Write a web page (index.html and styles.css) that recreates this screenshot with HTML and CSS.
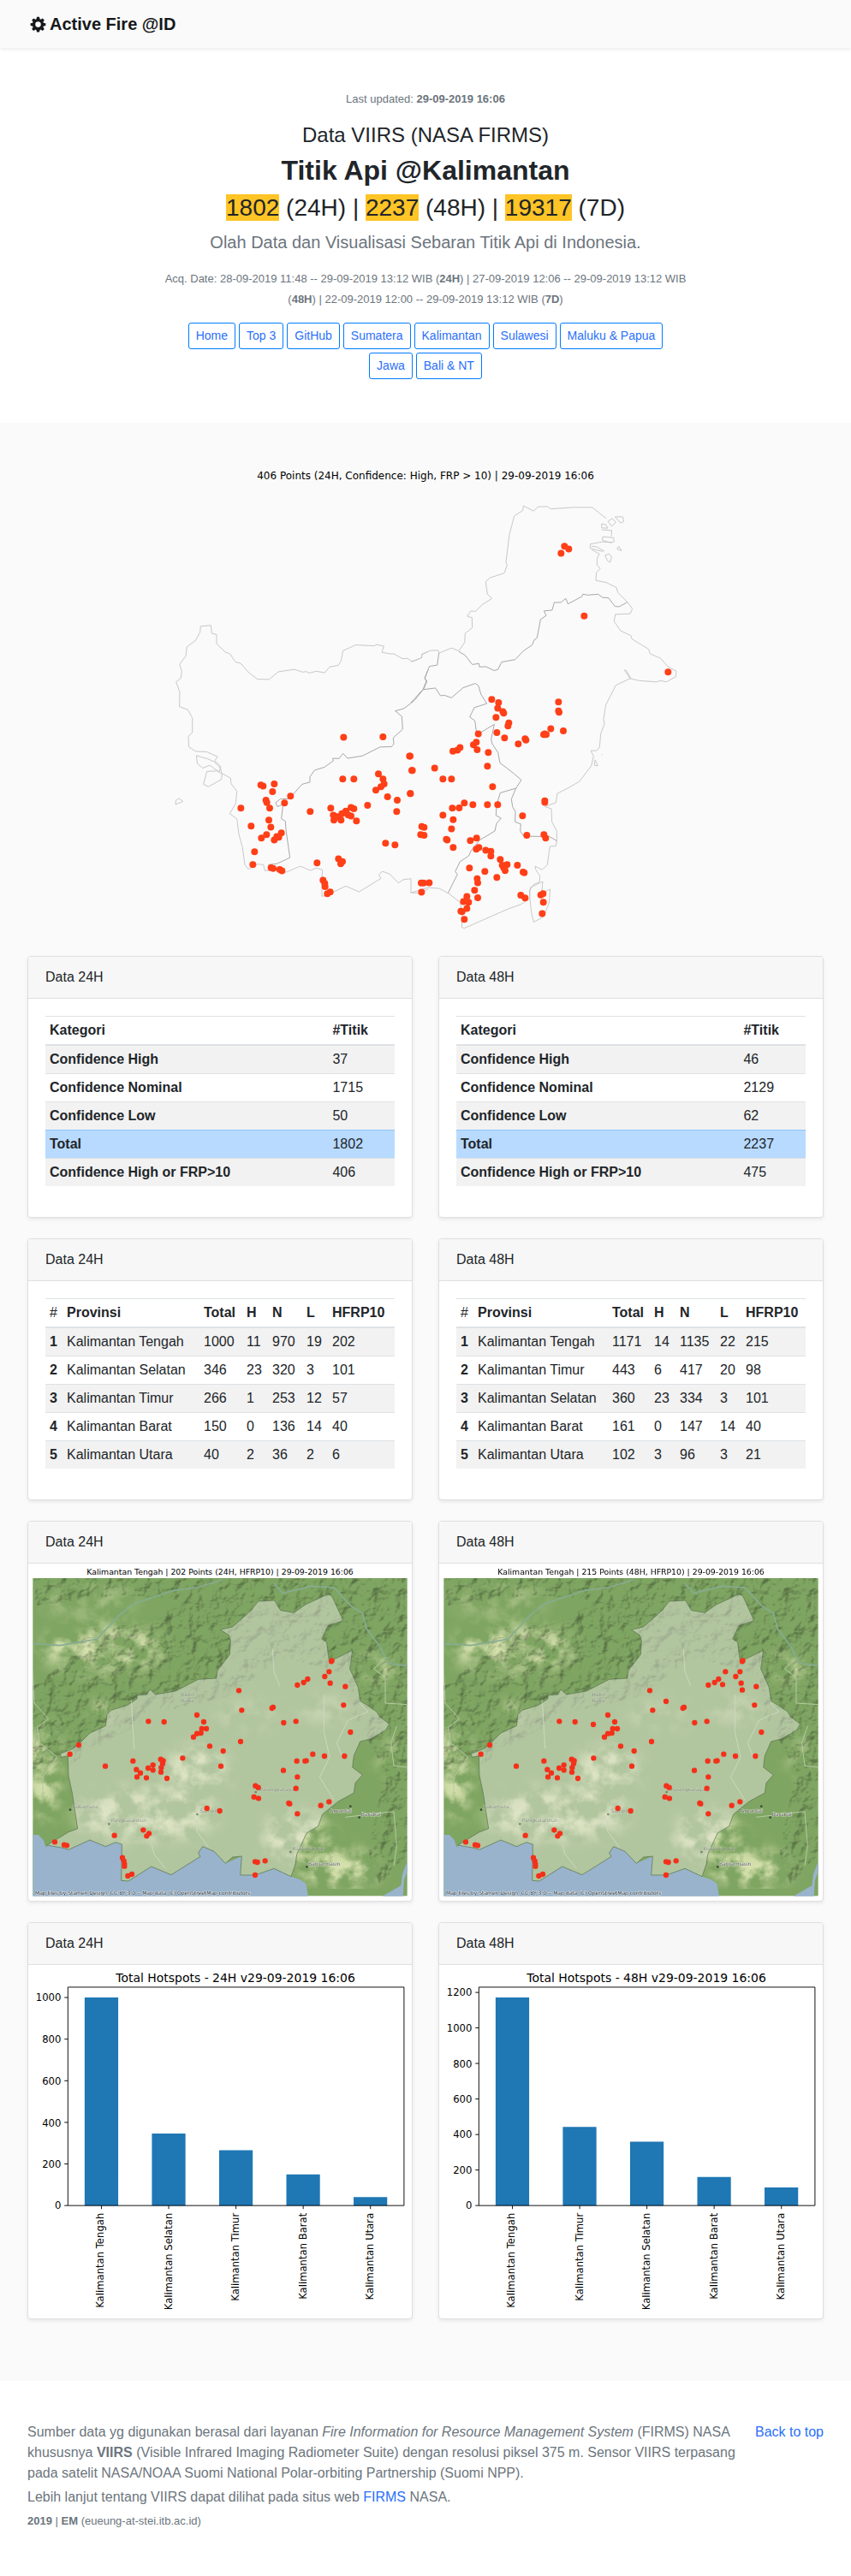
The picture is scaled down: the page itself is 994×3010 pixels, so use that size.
FILE: index.html
```html
<!DOCTYPE html>
<html lang="id">
<head>
<meta charset="utf-8">
<meta name="viewport" content="width=device-width, initial-scale=1">
<title>Active Fire @ID</title>
<link rel="stylesheet" href="styles.css">
</head>
<body id="top">
<header class="navbar">
  <a class="brand" href="#top">
    <svg class="brand-icon" viewBox="0 0 18 18" aria-hidden="true"><path fill-rule="evenodd" d="M7.6 .8h2.8l.5 2.3 1 .5 2.1-1.2 1.9 1.9-1.3 2 .5 1.1 2.3.5v2.5l-2.3.6-.5 1.1 1.3 2-1.9 1.9-2.1-1.2-1 .5-.5 2.2H7.6l-.5-2.2-1-.5-2.1 1.2-1.9-1.9 1.3-2-.5-1.1-2.3-.6V7.900l2.3-.5.5-1.100-1.3-2L4 2.400l2.100 1.200 1-.5zM9 6a3.100 3.100 0 1 0 0 6.200A3.100 3.100 0 0 0 9 6z"/></svg>
    <span>Active Fire @ID</span>
  </a>
</header>
<main>
<section class="hero">
  <div class="hero-inner">
    <p class="note">Last updated: <strong>29-09-2019 16:06</strong></p>
    <h3 class="source">Data VIIRS (NASA FIRMS)</h3>
    <h1 class="title">Titik Api @Kalimantan</h1>
    <h2 class="counts"><mark>1802</mark> (24H) | <mark>2237</mark> (48H) | <mark>19317</mark> (7D)</h2>
    <p class="lead">Olah Data dan Visualisasi Sebaran Titik Api di Indonesia.</p>
    <p class="note acq">Acq. Date: 28-09-2019 11:48 -- 29-09-2019 13:12 WIB (<strong>24H</strong>) | 27-09-2019 12:06 -- 29-09-2019 13:12 WIB (<strong>48H</strong>) | 22-09-2019 12:00 -- 29-09-2019 13:12 WIB (<strong>7D</strong>)</p>
    <nav class="links">
      <a class="btn" href="#home">Home</a>
      <a class="btn" href="#top3">Top 3</a>
      <a class="btn" href="#github">GitHub</a>
      <a class="btn" href="#sumatera">Sumatera</a>
      <a class="btn" href="#kalimantan">Kalimantan</a>
      <a class="btn" href="#sulawesi">Sulawesi</a>
      <a class="btn" href="#maluku">Maluku &amp; Papua</a>
      <a class="btn" href="#jawa">Jawa</a>
      <a class="btn" href="#bali">Bali &amp; NT</a>
    </nav>
  </div>
</section>
<section class="album">
  <div class="container">
    <svg class="island" viewBox="0 12 930 551" role="img" aria-label="Peta titik api Kalimantan">
      <text class="map-title" x="465" y="30" text-anchor="middle">406 Points (24H, Confidence: High, FRP &gt; 10) | 29-09-2019 16:06</text>
      <g transform="translate(148 0) scale(.33333 .35714)">
        <path class="coast" d="M960 648 938 656 938 668 905 681 888 670 870 671 840 655 825 655 798 650 805 630 780 625 770 629 707 626 685 635 662 645 655 678 645 693 615 698 598 717 568 712 545 718 532 713 520 715 492 706 435 714 403 739 362 738 330 715 303 686 285 682 266 655 250 650 219 622 219 592 202 588 199 562 163 565 161 584 145 612 115 632 111 662 89 690 97 710 94 735 77 747 90 780 89 828 118 838 134 865 134 913 120 925 122 960 145 974 185 976 223 992 212 1005 232 1022 236 1045 268 1062 270 1080 290 1105 286 1145 265 1178 290 1195 297 1245 310 1290 318 1345 330 1360 362 1343 383 1345 388 1365 425 1362 462 1370 512 1350 548 1364 568 1356 590 1362 588 1395 588 1448 600 1447 672 1415 718 1434 795 1390 787 1378 800 1367 825 1375 856 1405 873 1394 900 1391 900 1437 930 1438 960 1425M148 988 188 999 210 1008 232 1028 228 1042 195 1020 170 1029 152 1015ZM185 1040 222 1038 238 1050 236 1066 190 1090 173 1082ZM76 1135 88 1128 101 1138 75 1148Z"/>
        <path class="border" d="M960 707 949 735 956 745 945 770 912 808 876 834 845 842 868 860 871 902 838 930 840 950 832 959 792 960 730 989 678 997 662 981 648 998 626 997 628 1005 597 1026 562 1036 546 1058 546 1075 518 1082 490 1112 470 1130 442 1130 426 1142 432 1155 452 1148 446 1195 460 1203 462 1230 476 1322 430 1342 400 1345"/>
        <path class="fire" d="M664 928h0M802 927h0M895 990h0M903 1037h0M786 1048h0M661 1065h0M700 1065h0M802 1065h0M806 1081h0M795 1090h0M777 1101h0M898 1112h0M818 1123h0M852 1134h0M748 1151h0M850 1171h0M619 1160h0M690 1158h0M700 1162h0M672 1170h0M658 1178h0M628 1183h0M640 1188h0M690 1186h0M680 1182h0M655 1199h0M630 1199h0M709 1202h0M547 1171h0M374 1084h0M382 1088h0M421 1081h0M415 1106h0M392 1134h0M395 1142h0M405 1160h0M478 1121h0M457 1143h0M304 1160h0M402 1199h0M409 1222h0M340 1219h0M394 1247h0M376 1258h0M446 1241h0M430 1253h0M421 1264h0M437 1255h0M352 1303h0M346 1345h0M410 1355h0M417 1357h0M440 1361h0M448 1365h0M571 1339h0M646 1326h0M660 1335h0M654 1342h0M592 1396h0M598 1406h0M599 1417h0M607 1440h0M617 1434h0M811 1275h0M844 1280h0"/>
      </g>
      <g transform="translate(448 0) scale(.33333 .35714)">
        <path class="coast" d="M0 681 37 668 39 657 67 645 95 643 98 653 142 636 168 646 188 618 190 588 215 570 214 537 197 532 210 515 226 516 250 494 284 474 268 460 262 420 275 407 327 391 337 365 333 355 345 265 362 204 392 186 394 171 430 188 445 174 478 173 490 181 568 176 635 176 684 212M704 252 702 270M668 249 704 252M705 290 670 289 628 296 628 310 670 320 676 318 650 305 632 303M634 315 660 328 652 345 652 365 663 376 650 390 648 415 685 422 720 438 725 455 758 485 776 508 768 524 716 526 712 549 735 580 770 595 775 607 833 640 838 655 875 670 900 697 930 712 928 730 895 747 875 743 860 747 800 743 768 736 748 708 755 710 770 735 718 758 683 822 675 870 678 885 665 917 661 960 650 972 630 972 640 990 632 1022 590 1073 555 1092 513 1112 508 1142 470 1155 492 1162 494 1205 511 1235 511 1268 508 1284 487 1285 478 1345 460 1362 435 1350 437 1360 452 1382 450 1402 430 1410 415 1430 417 1455 385 1475 340 1490 187 1553 178 1550 180 1500 172 1468 130 1438 100 1423 60 1420 0 1437M462 1400 458 1440 488 1425 484 1470 465 1515 430 1533 422 1500 416 1450 418 1420ZM672 272 710 275 712 288 700 292 670 283ZM668 230 682 232 690 244 668 243ZM690 222 705 212 718 225 704 238ZM715 207 742 207 746 222 735 227ZM680 333 695 328 703 338 698 356 688 350ZM722 312 728 303 738 318ZM645 1002 655 1021 643 1020ZM668 985h3"/>
        <path class="border" d="M168 648 190 660 215 690 238 687 240 698 262 697 292 710 305 706 318 682 365 674 395 645 425 626 432 610 442 603 454 543 474 530 466 515 495 512 502 487 525 487 543 474 550 492 600 467 602 460 620 463 656 460 672 471 692 472 715 500 730 501 758 486M98 653 92 692 65 696 48 735 54 745 42 772 0 815M45 772 86 767 103 792 118 791 142 799 183 766 226 752 237 760 245 787 266 818 222 831 206 862 224 874 230 915 238 916 292 886 281 935 285 950 305 978 312 1012 358 1045 387 1068 368 1095 313 1110 300 1150 298 1184 316 1193 300 1210 294 1235 240 1265 210 1300 203 1316 172 1335 155 1368 163 1376 130 1438M368 1095 352 1130 356 1155 366 1172 365 1205 385 1212 383 1235 395 1252 485 1253 511 1267"/>
        <path class="fire" d="M538 303h0M553 312h0M526 326h0M607 531h0M901 715h0M283 804h0M307 815h0M304 833h0M322 844h0M325 849h0M298 863h0M343 881h0M340 891h0M517 813h0M517 842h0M519 846h0M301 913h0M328 930h0M400 933h0M403 937h0M376 950h0M490 900h0M534 907h0M465 919h0M474 919h0M469 917h0M236 917h0M229 944h0M219 953h0M232 969h0M271 978h0M172 962h0M163 970h0M147 974h0M268 1023h0M83 1029h0M112 1065h0M142 1065h0M286 1090h0M187 1143h0M145 1160h0M169 1159h0M217 1149h0M268 1149h0M304 1149h0M112 1183h0M148 1198h0M142 1228h0M124 1262h0M127 1264h0M148 1289h0M469 1136h0M469 1141h0M391 1185h0M406 1249h0M466 1247h0M472 1258h0M208 1266h0M230 1258h0M238 1289h0M229 1294h0M262 1298h0M280 1301h0M280 1317h0M313 1328h0M205 1356h0M259 1367h0M320 1347h0M337 1345h0M325 1355h0M330 1364h0M373 1347h0M393 1369h0M397 1371h0M301 1387h0M232 1391h0M234 1404h0M223 1429h0M234 1453h0M196 1449h0M184 1466h0M202 1468h0M196 1488h0M175 1497h0M179 1499h0M187 1524h0M385 1445h0M400 1454h0M463 1440h0M455 1444h0M464 1468h0M460 1505h0M64 1404h0M44 1405h0M36 1405h0M38 1220h0M46 1223h0M34 1247h0M46 1249h0M37 1435h0M-3 990h0M5 1037h0M-2 1112h0"/>
      </g>
    </svg>

    <div class="cards">
      <article class="card">
        <div class="card-header">Data 24H</div>
        <div class="card-body">
          <table class="table summary">
            <thead><tr><th scope="col">Kategori</th><th scope="col">#Titik</th></tr></thead>
            <tbody>
              <tr><th scope="row">Confidence High</th><td>37</td></tr>
              <tr><th scope="row">Confidence Nominal</th><td>1715</td></tr>
              <tr><th scope="row">Confidence Low</th><td>50</td></tr>
              <tr class="total"><th scope="row">Total</th><td>1802</td></tr>
              <tr><th scope="row">Confidence High or FRP&gt;10</th><td>406</td></tr>
            </tbody>
          </table>
        </div>
      </article>
      <article class="card">
        <div class="card-header">Data 48H</div>
        <div class="card-body">
          <table class="table summary">
            <thead><tr><th scope="col">Kategori</th><th scope="col">#Titik</th></tr></thead>
            <tbody>
              <tr><th scope="row">Confidence High</th><td>46</td></tr>
              <tr><th scope="row">Confidence Nominal</th><td>2129</td></tr>
              <tr><th scope="row">Confidence Low</th><td>62</td></tr>
              <tr class="total"><th scope="row">Total</th><td>2237</td></tr>
              <tr><th scope="row">Confidence High or FRP&gt;10</th><td>475</td></tr>
            </tbody>
          </table>
        </div>
      </article>

      <article class="card">
        <div class="card-header">Data 24H</div>
        <div class="card-body">
          <table class="table provinces">
            <colgroup><col class="c-rank"><col class="c-name"><col class="c-total"><col class="c-h"><col class="c-n"><col class="c-l"><col></colgroup>
            <thead><tr><td>#</td><th scope="col">Provinsi</th><th scope="col">Total</th><th scope="col">H</th><th scope="col">N</th><th scope="col">L</th><th scope="col">HFRP10</th></tr></thead>
            <tbody>
              <tr><th scope="row">1</th><td>Kalimantan Tengah</td><td>1000</td><td>11</td><td>970</td><td>19</td><td>202</td></tr>
              <tr><th scope="row">2</th><td>Kalimantan Selatan</td><td>346</td><td>23</td><td>320</td><td>3</td><td>101</td></tr>
              <tr><th scope="row">3</th><td>Kalimantan Timur</td><td>266</td><td>1</td><td>253</td><td>12</td><td>57</td></tr>
              <tr><th scope="row">4</th><td>Kalimantan Barat</td><td>150</td><td>0</td><td>136</td><td>14</td><td>40</td></tr>
              <tr><th scope="row">5</th><td>Kalimantan Utara</td><td>40</td><td>2</td><td>36</td><td>2</td><td>6</td></tr>
            </tbody>
          </table>
        </div>
      </article>
      <article class="card">
        <div class="card-header">Data 48H</div>
        <div class="card-body">
          <table class="table provinces wide-n">
            <colgroup><col class="c-rank"><col class="c-name"><col class="c-total"><col class="c-h"><col class="c-n"><col class="c-l"><col></colgroup>
            <thead><tr><td>#</td><th scope="col">Provinsi</th><th scope="col">Total</th><th scope="col">H</th><th scope="col">N</th><th scope="col">L</th><th scope="col">HFRP10</th></tr></thead>
            <tbody>
              <tr><th scope="row">1</th><td>Kalimantan Tengah</td><td>1171</td><td>14</td><td>1135</td><td>22</td><td>215</td></tr>
              <tr><th scope="row">2</th><td>Kalimantan Timur</td><td>443</td><td>6</td><td>417</td><td>20</td><td>98</td></tr>
              <tr><th scope="row">3</th><td>Kalimantan Selatan</td><td>360</td><td>23</td><td>334</td><td>3</td><td>101</td></tr>
              <tr><th scope="row">4</th><td>Kalimantan Barat</td><td>161</td><td>0</td><td>147</td><td>14</td><td>40</td></tr>
              <tr><th scope="row">5</th><td>Kalimantan Utara</td><td>102</td><td>3</td><td>96</td><td>3</td><td>21</td></tr>
            </tbody>
          </table>
        </div>
      </article>

      <article class="card">
        <div class="card-header">Data 24H</div>
        <svg class="figure" viewBox="9 171 1344 1182" role="img" aria-label="Peta titik api Kalimantan Tengah, 24 jam">
          <defs>
            <clipPath id="frame"><rect x="25" y="222" width="1312" height="1114"/></clipPath>
            <filter id="soft" x="-50%" y="-50%" width="200%" height="200%"><feGaussianBlur stdDeviation="28"/></filter>
            <filter id="patches" x="0" y="0" width="100%" height="100%" color-interpolation-filters="sRGB">
              <feTurbulence type="fractalNoise" baseFrequency=".016" numOctaves="5" seed="11"/>
              <feColorMatrix values="0 0 0 0 .84  0 0 0 0 .88  0 0 0 0 .68  3 0 0 0 -1.1"/>
              <feComposite in2="SourceGraphic" operator="in"/>
            </filter>
            <filter id="relief" x="0" y="0" width="100%" height="100%" color-interpolation-filters="sRGB">
              <feTurbulence type="fractalNoise" baseFrequency=".022" numOctaves="4" seed="4"/>
              <feDiffuseLighting lighting-color="#fff" surfaceScale="16" diffuseConstant="1.2"><feDistantLight azimuth="225" elevation="60"/></feDiffuseLighting>
              <feComposite in2="SourceGraphic" operator="in"/>
            </filter>
            <g id="basemap" clip-path="url(#frame)">
              <rect x="25" y="222" width="1312" height="1114" fill="#7fa562"/>
              <g filter="url(#patches)">
                <g filter="url(#soft)">
                  <ellipse cx="220" cy="300" rx="170" ry="60" opacity=".4"/>
                  <ellipse cx="270" cy="470" rx="220" ry="80"/>
                  <ellipse cx="60" cy="900" rx="60" ry="170"/>
                  <ellipse cx="265" cy="690" rx="40" ry="30"/>
                  <ellipse cx="420" cy="1050" rx="250" ry="90"/>
                  <ellipse cx="600" cy="900" rx="110" ry="90"/>
                  <ellipse cx="780" cy="700" rx="120" ry="50" opacity=".4"/>
                  <ellipse cx="1050" cy="680" rx="100" ry="50" opacity=".5"/>
                  <ellipse cx="950" cy="1130" rx="120" ry="90"/>
                  <ellipse cx="1240" cy="540" rx="70" ry="40"/>
                  <ellipse cx="1100" cy="1240" rx="140" ry="70"/>
                  <ellipse cx="1270" cy="850" rx="40" ry="80" opacity=".5"/>
                </g>
              </g>
              <path class="relief" filter="url(#relief)" d="M25 222H1337V1190L1240 1300 1200 1180 1260 900 1150 700 1130 560 900 500 700 640 480 690 270 800 150 880 25 900V600L160 500 220 400 420 380 560 300 330 280 25 320Z"/>
              <path class="river" d="M25 452 120 458 250 436 330 350 380 312 520 265 600 255 690 228M870 240 900 275 1000 250 1080 255 1140 320 1180 345 1195 400 1240 460 1270 520 1337 530"/>
              <path class="stream" d="M25 545 30 660 80 715 40 745 50 800 110 850 60 920 60 1000M865 470 870 550 890 600M1045 630 1045 760 1065 850 1030 920 1080 1000M1260 500 1220 540 1260 570 1260 660 1337 665M1170 660 1200 690 1130 720 1090 800 1110 850M1300 740 1280 800 1290 880 1337 885M370 650 380 820M590 1050 600 1110 640 1165M440 1150 450 1190 490 1240M1120 1060 1290 1040 1300 1160 1290 1230"/>
              <path class="sea" d="M25 1122 45 1122 62 1140 70 1165 80 1158 100 1160 150 1174 225 1140 280 1163 315 1148 337 1155 335 1282 360 1284 440 1233 510 1262 612 1198 605 1185 620 1163 660 1180 700 1222 757 1197 752 1263 805 1263 870 1240 930 1268 960 1278 982 1292 990 1337H25ZM1337 1215 1320 1260 1315 1300 1250 1337H1322L1326 1280 1337 1250Z"/>
              <path class="province" d="M1055 280Q1072 276 1080 300L1110 365 1108 373 1060 388 1037 435 1055 447 1063 512 1090 502 1145 475 1136 540 1165 605 1172 652 1230 690 1240 708 1274 733 1262 755 1210 785 1172 795 1150 845 1145 885 1180 912 1155 940 1150 975 1095 1005 1040 1050 1025 1092 985 1115 950 1190 945 1225 930 1268 870 1240 805 1263 752 1263 757 1197 725 1200 700 1222 660 1180 620 1163 605 1185 612 1198 510 1262 440 1233 360 1284 335 1282 337 1155 315 1148 280 1163 225 1140 150 1174 130 1168 75 1158 150 1112 182 1100 163 975 150 915 148 845 125 850 120 838 165 820 190 800 225 765 280 740 285 700 300 685 355 668 390 645 390 632 425 630 435 612 455 630 525 618 605 577 668 573 672 545 715 490 718 440 712 422 682 403 725 393 790 335 815 303 872 300 893 335 940 343 980 315Z"/>
              <g class="place-marks"><circle cx="156" cy="1034" r="4"/><circle cx="1138" cy="1022" r="4"/><circle cx="1169" cy="1061" r="4"/><circle cx="985" cy="1234" r="4"/></g>
              <g class="place-marks faded"><circle cx="292" cy="1084" r="4"/><circle cx="601" cy="1050" r="4"/><circle cx="928" cy="1182" r="4"/><circle cx="806" cy="972" r="4"/></g>
              <g class="place faded"><text x="545" y="635">Bukit</text><text x="545" y="658">Baka</text><text x="820" y="968">Palangkaraya</text><text x="610" y="1045">Sampit</text><text x="163" y="1028">Sukamara</text><text x="298" y="1077">Pangkalanbun</text><text x="934" y="1176">Kualakapuas</text></g>
              <g class="place"><text x="1066" y="1043">Amuntai</text><text x="1175" y="1055">Barabai</text><text x="990" y="1229">Banjarmasin</text></g>
              <path class="fire-local" d="M1073 511h0M1071 514h0M1063 550h0M1048 567h0M1067 590h0M1120 602h0M988 576h0M974 588h0M952 597h0M747 616h0M1114 667h0M757 685h0M867 675h0M863 678h0M947 724h0M904 729h0M600 702h0M430 724h0M485 726h0M624 726h0M617 750h0M633 750h0M614 765h0M600 767h0M588 779h0M1138 762h0M753 795h0M645 811h0M692 828h0M186 807h0M155 839h0M550 853h0M684 881h0M279 881h0M376 863h0M473 857h0M482 862h0M480 872h0M475 886h0M474 902h0M446 877h0M429 888h0M446 895h0M388 893h0M402 905h0M390 919h0M423 922h0M495 924h0M1006 839h0M1047 846h0M1117 846h0M950 863h0M979 863h0M983 862h0M903 896h0M952 919h0M947 959h0M805 950h0M815 956h0M800 989h0M816 994h0M922 1011h0M925 1013h0M1063 1006h0M1034 1019h0M952 1048h0M635 1029h0M680 1038h0M412 1105h0M432 1117h0M424 1126h0M311 1124h0M102 1147h0M135 1157h0M144 1159h0M339 1202h0M344 1213h0M346 1224h0M346 1232h0M358 1266h0M372 1260h0M804 1216h0M812 1218h0M839 1213h0M804 1263h0"/>
              <text class="credit" x="33" y="1331">Map tiles by Stamen Design, CC BY 3.0 -- Map data (C) OpenStreetMap contributors</text>
            </g>
          </defs>
          <use href="#basemap"/>
          <text class="figure-title" x="681" y="210" text-anchor="middle">Kalimantan Tengah | 202 Points (24H, HFRP10) | 29-09-2019 16:06</text>
        </svg>
      </article>
      <article class="card">
        <div class="card-header">Data 48H</div>
        <svg class="figure" viewBox="9 171 1344 1182" role="img" aria-label="Peta titik api Kalimantan Tengah, 48 jam">
          <use href="#basemap"/>
          <path class="fire-local" d="M1012 550h0M1002 595h0M1071 614h0M804 654h0M549 735h0"/>
          <text class="figure-title" x="681" y="210" text-anchor="middle">Kalimantan Tengah | 215 Points (48H, HFRP10) | 29-09-2019 16:06</text>
        </svg>
      </article>

      <article class="card">
        <div class="card-header">Data 24H</div>
        <svg class="figure chart" viewBox="0 0 385 355" role="img" aria-label="Total Hotspots 24H">
          <text class="chart-title" x="208" y="17" text-anchor="middle">Total Hotspots - 24H v29-09-2019 16:06</text>
          <path class="bars" d="M56.600 241.600v-208.900h33.700v208.900zM124.100 241.600v-72.300h33.700v72.300zM191.600 241.600v-55.600h33.700v55.600zM259.100 241.600v-31.300h33.700v31.300zM326.600 241.600v-8.400h33.700v8.400z"/>
          <path class="axis" d="M39.800 22.300H377.200V241.600H39.800ZM36.300 241.600h3.500M36.300 199.800h3.500M36.300 158.100h3.500M36.300 116.300h3.500M36.300 74.500h3.500M36.300 32.700h3.500M73.500 241.600v3.500M141 241.600v3.500M208.500 241.600v3.500M276 241.600v3.500M343.500 241.600v3.500"/>
          <g class="ticks" text-anchor="end">
            <text x="33" y="245">0</text><text x="33" y="204">200</text><text x="33" y="162">400</text><text x="33" y="120">600</text><text x="33" y="78">800</text><text x="33" y="36">1000</text>
            <text transform="translate(76 249) rotate(-90)">Kalimantan Tengah</text>
            <text transform="translate(144 249) rotate(-90)">Kalimantan Selatan</text>
            <text transform="translate(211 249) rotate(-90)">Kalimantan Timur</text>
            <text transform="translate(279 249) rotate(-90)">Kalimantan Barat</text>
            <text transform="translate(346 249) rotate(-90)">Kalimantan Utara</text>
          </g>
        </svg>
      </article>
      <article class="card">
        <div class="card-header">Data 48H</div>
        <svg class="figure chart" viewBox="0 0 385 355" role="img" aria-label="Total Hotspots 48H">
          <text class="chart-title" x="208" y="17" text-anchor="middle">Total Hotspots - 48H v29-09-2019 16:06</text>
          <path class="bars" d="M56.600 241.600v-208.900h33.700v208.900zM124.100 241.600v-79h33.700v79zM191.600 241.600v-64.200h33.700v64.200zM259.100 241.600v-28.700h33.700v28.700zM326.600 241.600v-18.200h33.700v18.200z"/>
          <path class="axis" d="M39.800 22.300H377.200V241.600H39.800ZM36.300 241.600h3.500M36.300 205.900h3.500M36.300 170.300h3.500M36.300 134.600h3.500M36.300 98.900h3.500M36.300 63.200h3.500M36.300 27.600h3.500M73.500 241.600v3.500M141 241.600v3.500M208.500 241.600v3.500M276 241.600v3.500M343.500 241.600v3.500"/>
          <g class="ticks" text-anchor="end">
            <text x="33" y="245">0</text><text x="33" y="210">200</text><text x="33" y="174">400</text><text x="33" y="138">600</text><text x="33" y="103">800</text><text x="33" y="67">1000</text><text x="33" y="31">1200</text>
            <text transform="translate(76 249) rotate(-90)">Kalimantan Tengah</text>
            <text transform="translate(144 249) rotate(-90)">Kalimantan Timur</text>
            <text transform="translate(211 249) rotate(-90)">Kalimantan Selatan</text>
            <text transform="translate(279 249) rotate(-90)">Kalimantan Barat</text>
            <text transform="translate(346 249) rotate(-90)">Kalimantan Utara</text>
          </g>
        </svg>
      </article>
    </div>
  </div>
</section>
</main>
<footer class="footer">
  <div class="container footer-row">
    <div class="about">
      <p>Sumber data yg digunakan berasal dari layanan <em>Fire Information for Resource Management System</em> (FIRMS) NASA khususnya <strong>VIIRS</strong> (Visible Infrared Imaging Radiometer Suite) dengan resolusi piksel 375 m. Sensor VIIRS terpasang pada satelit NASA/NOAA Suomi National Polar-orbiting Partnership (Suomi NPP).</p>
      <p>Lebih lanjut tentang VIIRS dapat dilihat pada situs web <a href="#firms">FIRMS</a> NASA.</p>
      <p class="note"><strong>2019</strong> | <strong>EM</strong> (eueung-at-stei.itb.ac.id)</p>
    </div>
    <a class="back" href="#top">Back to top</a>
  </div>
</footer>
</body>
</html>
```
FILE: styles.css
```css
* { box-sizing: border-box; }
body {
  margin: 0;
  background: #fff;
  color: #212529;
  font: 16px/24px "Liberation Sans", Arial, sans-serif;
}
h1, h2, h3, p { margin: 0; }
a { color: #2a70fa; text-decoration: none; }

.navbar {
  display: flex;
  align-items: center;
  height: 56px;
  padding: 0 35px;
  background: #fafafa;
  box-shadow: 0 2px 4px rgba(0, 0, 0, .075);
}
.brand {
  display: flex;
  align-items: center;
  gap: 4px;
  color: #16181b;
  font-size: 20px;
  font-weight: 700;
}
.brand-icon { width: 19px; height: 19px; fill: currentColor; }

.hero { padding: 48px 16px 51px; text-align: center; }
.hero-inner { max-width: 610px; margin: 0 auto; }
.note { color: #6c757d; font-size: 13px; }
.source { margin-top: 15px; font-size: 24px; line-height: 29px; font-weight: 400; }
.title { margin-top: 8px; font-size: 32px; line-height: 38px; }
.counts { margin-top: 8px; font-size: 28px; line-height: 34px; font-weight: 400; }
.counts mark { background: #ffc425; color: inherit; }
.lead { margin-top: 8px; color: #6c757d; font-size: 20px; line-height: 30px; }
.acq { margin: 16px 0 15px; }
.links { display: flex; flex-wrap: wrap; justify-content: center; gap: 4px; padding: 0 8px; }
.btn {
  padding: 4px 8px;
  border: 1px solid #007bff;
  border-radius: 3px;
  font-size: 14px;
  line-height: 21px;
}

.container { max-width: 994px; margin: 0 auto; padding: 0 32px; }
.album { padding: 48px 0 72px; background: #fafafa; }
.island { display: block; width: 100%; margin-bottom: 24px; }
.map-title { font: 12px "DejaVu Sans", sans-serif; fill: #000; }
.coast, .border { fill: none; stroke: #c8c8c8; vector-effect: non-scaling-stroke; stroke-linejoin: round; }
.border { stroke: #a8a8a8; }
.fire {
  fill: none;
  stroke: #ff3f17;
  stroke-width: 8px;
  stroke-linecap: round;
  vector-effect: non-scaling-stroke;
}

.cards { display: grid; grid-template-columns: repeat(2, minmax(0, 1fr)); gap: 24px 30px; }
.card {
  border: 1px solid #dfdfdf;
  border-radius: 4px;
  background: #fff;
  box-shadow: 0 2px 4px rgba(0, 0, 0, .075);
  overflow: hidden;
}
.card-header { padding: 12px 20px; border-bottom: 1px solid #dfdfdf; background: #f7f7f7; }
.card-body { padding: 20px; }

.table { width: 100%; margin-bottom: 16px; border-collapse: collapse; table-layout: fixed; text-align: left; }
.table th, .table td { padding: 4px 0 4px 5px; border-top: 1px solid #dee2e6; }
.table thead th, .table thead td { border-bottom: 2px solid #dee2e6; }
.table tbody tr:nth-child(odd) { background: #f2f2f2; }
.table tbody .total { background: #b8daff; }
.table .total th, .table .total td { border-color: #8fc3fb; }
.summary th:first-child { width: 81%; }
.c-rank { width: 20px; }
.c-name { width: 160px; }
.c-total { width: 50px; }
.c-h { width: 30px; }
.c-n { width: 40px; }
.c-l { width: 30px; }
.wide-n .c-name { width: 157px; }
.wide-n .c-total { width: 49px; }
.wide-n .c-n { width: 47px; }

.figure { display: block; width: 100%; font-family: "DejaVu Sans", sans-serif; }
.figure-title { font-size: 28px; fill: #000; }
.sea { fill: #99b3cd; }
.relief { mix-blend-mode: multiply; opacity: .5; }
.province { fill: #e4e6dc; fill-opacity: .5; stroke: #55704a; stroke-width: 2px; }
.river { fill: none; stroke: #86ac92; stroke-width: 5px; }
.stream { fill: none; stroke: #b5cba2; stroke-width: 3px; }
.place { font-size: 18px; fill: #555a52; paint-order: stroke; stroke: #e6eadf; stroke-width: 2px; }
.place-marks { fill: #3c4b3c; }
.faded { opacity: .55; }
.fire-local { fill: none; stroke: #f5301a; stroke-width: 19px; stroke-linecap: round; }
.credit { font-size: 18px; fill: #30383f; paint-order: stroke; stroke: #dde4ea; stroke-width: 3px; }

.bars { fill: #1f77b4; }
.axis { fill: none; stroke: #000; stroke-width: .8px; }
.ticks { font-size: 10px; }
.chart-title { font-size: 12px; }

.footer { padding: 48px 0 40px; color: #6c757d; }
.footer-row { display: flex; align-items: flex-start; gap: 16px; }
.about { flex: 1; }
.about p { margin-bottom: 4px; }
.back { white-space: nowrap; }
```
